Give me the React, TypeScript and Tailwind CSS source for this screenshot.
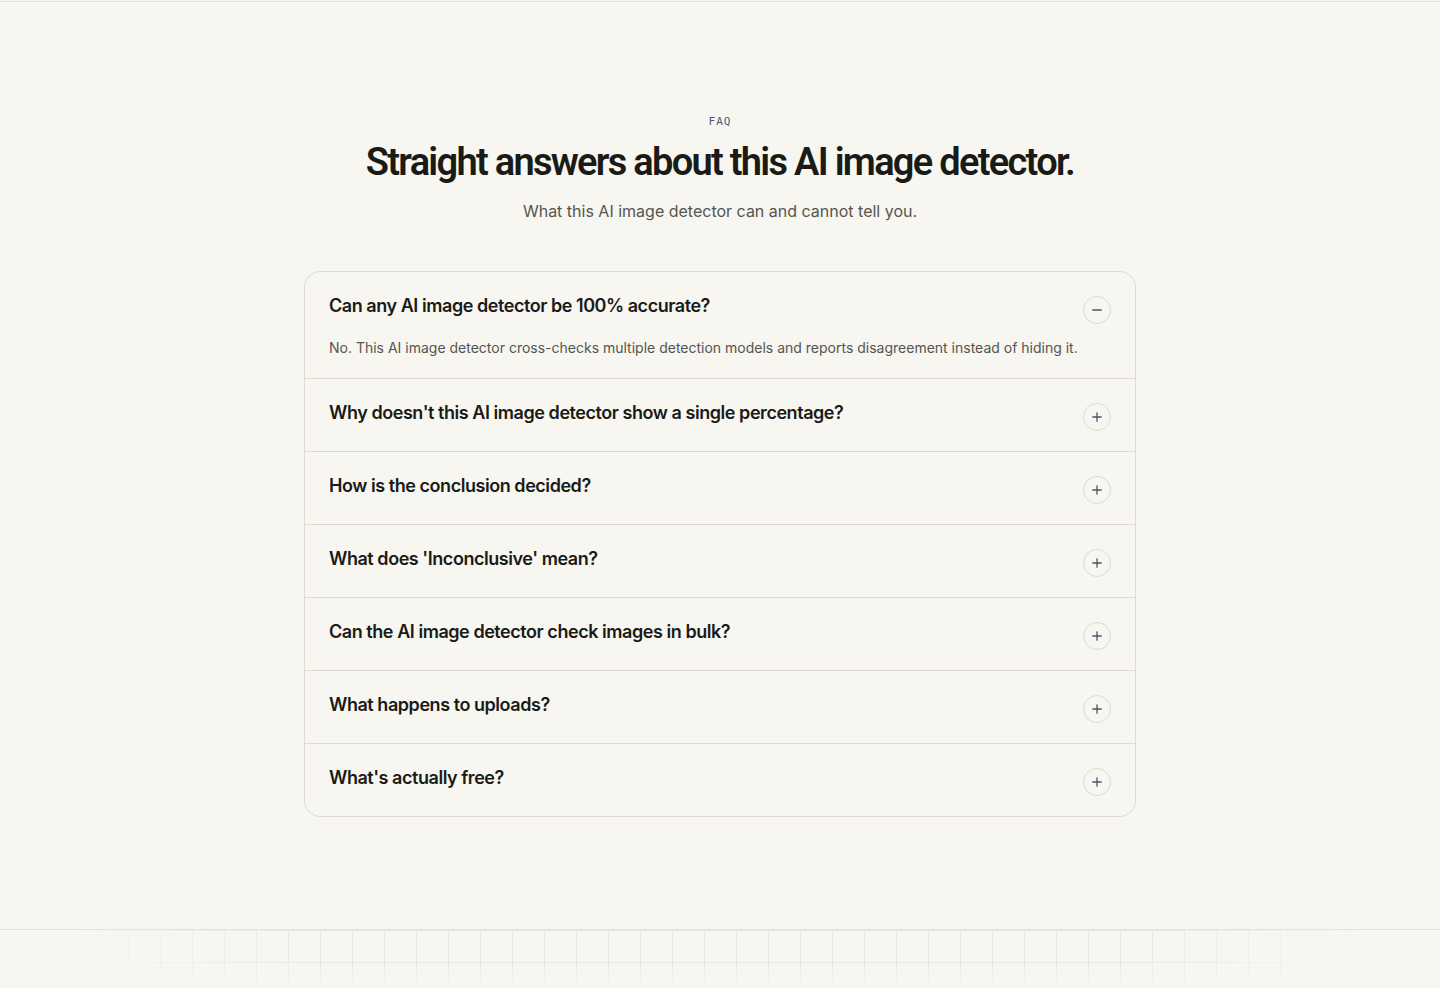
import React, { useState } from "react";

const faqs = [
  {
    q: "Can any AI image detector be 100% accurate?",
    a: "No. This AI image detector cross-checks multiple detection models and reports disagreement instead of hiding it.",
  },
  { q: "Why doesn't this AI image detector show a single percentage?", a: "Because a single percentage hides disagreement between models." },
  { q: "How is the conclusion decided?", a: "The conclusion is based on agreement across multiple detection models." },
  { q: "What does 'Inconclusive' mean?", a: "The models disagree, or the signals are too weak to call." },
  { q: "Can the AI image detector check images in bulk?", a: "Yes, you can upload several images at once." },
  { q: "What happens to uploads?", a: "Uploads are processed for detection and not kept." },
  { q: "What's actually free?", a: "Basic checks are free." },
];

function Icon({ open }: { open: boolean }) {
  return (
    <span className="mt-1 flex h-7 w-7 shrink-0 items-center justify-center rounded-full border border-[#dcdad3] text-[#4b5563]">
      <svg width="10" height="10" viewBox="0 0 10 10" fill="none" stroke="currentColor" strokeWidth="1.3" strokeLinecap="round">
        <line x1="0.8" y1="5" x2="9.2" y2="5" />
        {!open && <line x1="5" y1="0.8" x2="5" y2="9.2" />}
      </svg>
    </span>
  );
}

export default function App() {
  const [open, setOpen] = useState<number>(0);
  return (
    <div className="min-h-screen bg-[#f7f6f1]" style={{ fontFamily: "Inter, 'Noto Sans', sans-serif" }}>
      <div className="h-[2px] border-b border-[#e3e1db]" />
      <section className="flex flex-col items-center pt-[112px]">
        <div className="text-[11px] leading-4 tracking-[0.1em] text-[#4a5a70]" style={{ fontFamily: "'DejaVu Sans Mono', 'Liberation Mono', monospace" }}>
          FAQ
        </div>
        <h2
          className="mt-2 text-[38px] font-semibold leading-[48px] tracking-[-0.045em] text-[#1a1a17]"
          style={{ fontFamily: "Roboto, Inter, sans-serif" }}
        >
          Straight answers about this AI image detector.
        </h2>
        <p className="mt-[13px] text-base leading-6 text-[#55554f]">What this AI image detector can and cannot tell you.</p>

        <div className="mt-12 w-[832px] overflow-hidden rounded-2xl border border-[#dddbd4]">
          {faqs.map((f, i) => {
            const isOpen = open === i;
            return (
              <div key={i} className={i > 0 ? "border-t border-[#dddbd4]" : ""}>
                <button
                  className="flex w-full items-start justify-between px-6 py-5 text-left"
                  onClick={() => setOpen(isOpen ? -1 : i)}
                >
                  <span className="text-[18px] font-semibold leading-7 tracking-[-0.025em] text-[#1a1a17]">{f.q}</span>
                  <Icon open={isOpen} />
                </button>
                {isOpen && (
                  <div className="-mt-2 px-6 pb-[18px] text-sm leading-6 text-[#55554f]">{f.a}</div>
                )}
              </div>
            );
          })}
        </div>
      </section>
      <footer className="mt-[112px] border-t border-[#e3e1db]">
        <div className="[mask-image:linear-gradient(to_right,transparent_5%,black_22%,black_78%,transparent_95%)]">
          <div className="h-[58px] bg-[linear-gradient(to_right,#e9e7e1_1px,transparent_1px),linear-gradient(to_bottom,#e9e7e1_1px,transparent_1px)] bg-[size:32px_32px] bg-[position:0px_0px] [mask-image:linear-gradient(to_bottom,black_60%,transparent_100%)]" />
        </div>
      </footer>
    </div>
  );
}
